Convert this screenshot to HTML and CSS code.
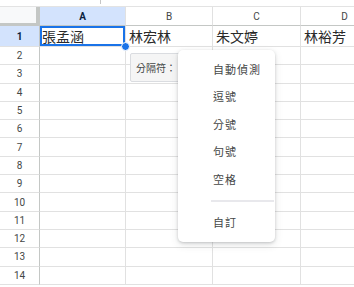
FILE: index.html
```html
<!DOCTYPE html>
<html lang="zh-Hant">
<head>
    <meta charset="UTF-8">
    <meta name="viewport" content="width=device-width, initial-scale=1.0">
    <title>試算表 - 分隔符</title>
    <link rel="stylesheet" href="styles.css">
</head>
<body>
    <div class="page">
        <div class="toolbar-edge"><span class="tick"></span></div>

        <div class="sheet">
            <div class="corner"></div>
            <div class="col-head active">A</div>
            <div class="col-head">B</div>
            <div class="col-head">C</div>
            <div class="col-head">D</div>

            <div class="row-head active">1</div>
            <div class="cell selected">張孟涵<span class="handle"></span></div>
            <div class="cell">林宏林</div>
            <div class="cell">朱文婷</div>
            <div class="cell">林裕芳</div>
        </div>

        <div class="split-chip">分隔符：</div>

        <ul class="menu">
            <li class="menu-item">自動偵測</li>
            <li class="menu-item">逗號</li>
            <li class="menu-item">分號</li>
            <li class="menu-item">句號</li>
            <li class="menu-item">空格</li>
            <li class="menu-sep"></li>
            <li class="menu-item">自訂</li>
        </ul>
    </div>

    <script>
        // 填入空白列 2 ~ 14
        const sheet = document.querySelector('.sheet');
        for (let r = 2; r <= 14; r++) {
            const head = document.createElement('div');
            head.className = 'row-head';
            head.textContent = r;
            sheet.appendChild(head);
            for (let c = 0; c < 4; c++) {
                const cell = document.createElement('div');
                cell.className = 'cell';
                sheet.appendChild(cell);
            }
        }
    </script>
</body>
</html>
```

FILE: styles.css
```css
* {
    margin: 0;
    padding: 0;
    box-sizing: border-box;
}

body {
    font-family: "Liberation Sans", "Noto Sans CJK TC", sans-serif;
    background: #ffffff;
    overflow: hidden;
}

.page {
    position: relative;
    width: 354px;
    height: 287px;
    overflow: hidden;
}

.toolbar-edge {
    height: 7px;
    background: #ffffff;
    border-bottom: 1px solid #e3e3e3;
    position: relative;
}

.tick {
    position: absolute;
    left: 100px;
    top: 0;
    width: 1px;
    height: 4px;
    background: #c6c6c6;
}

.sheet {
    display: grid;
    grid-template-columns: 40px 86px 87px 88px 88px;
    grid-template-rows: 19px 21px repeat(13, 18.3px);
}

.corner {
    background: #f8f9fa;
    border-right: 4px solid #c4c7c5;
    border-bottom: 3px solid #c4c7c5;
}

.col-head {
    display: flex;
    align-items: center;
    justify-content: center;
    font-family: Roboto, "Liberation Sans", sans-serif;
    font-size: 10px;
    color: #444746;
    background: #ffffff;
    border-right: 1px solid #e1e1e1;
    border-bottom: 1px solid #c4c7c5;
}

.col-head.active,
.row-head.active {
    background: #d3e3fd;
    color: #0b1f3f;
    font-weight: bold;
}

.row-head {
    display: flex;
    align-items: center;
    justify-content: center;
    font-family: Roboto, "Liberation Sans", sans-serif;
    font-size: 10px;
    color: #444746;
    background: #ffffff;
    border-right: 1px solid #c4c7c5;
    border-bottom: 1px solid #e1e1e1;
}

.cell {
    position: relative;
    display: flex;
    align-items: center;
    padding-left: 3px;
    font-family: "Noto Sans CJK TC", sans-serif;
    font-size: 14px;
    color: #2a2a2a;
    border-right: 1px solid #e1e1e1;
    border-bottom: 1px solid #e1e1e1;
    white-space: nowrap;
}

.cell.selected {
    box-shadow: inset 0 0 0 2px #1a73e8;
    padding-left: 2px;
}

.handle {
    position: absolute;
    right: -5px;
    bottom: -5px;
    width: 9px;
    height: 9px;
    border-radius: 50%;
    background: #1a73e8;
    border: 1px solid #ffffff;
    z-index: 2;
}

.split-chip {
    position: absolute;
    left: 130px;
    top: 53px;
    width: 60px;
    height: 29px;
    padding-left: 5px;
    display: flex;
    align-items: center;
    font-family: "Noto Sans CJK TC", sans-serif;
    font-size: 10px;
    color: #444746;
    background: #f5f5f5;
    border: 1px solid #dadce0;
    border-radius: 2px;
}

.menu {
    position: absolute;
    left: 178px;
    top: 50px;
    width: 97px;
    height: 192px;
    list-style: none;
    padding-top: 5px;
    background: #ffffff;
    border-radius: 5px;
    box-shadow: 0 1px 3px rgba(60, 64, 67, 0.25), 0 3px 8px rgba(60, 64, 67, 0.12);
    z-index: 3;
}

.menu-item {
    height: 27.5px;
    display: flex;
    align-items: center;
    padding-left: 35px;
    font-family: "Noto Sans CJK TC", sans-serif;
    font-size: 11px;
    letter-spacing: 1px;
    color: #444746;
}

.menu-sep {
    height: 2px;
    margin: 7px 1px 7px 33px;
    background: #e8e8ec;
}
```
